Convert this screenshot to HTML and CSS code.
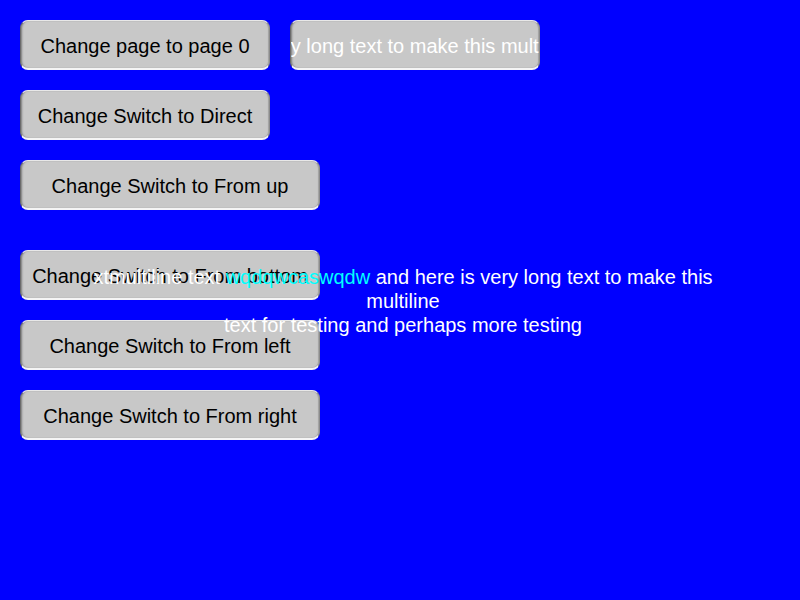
FILE: index.html
```html
<!DOCTYPE html>
<html>
<head>
<meta charset="utf-8">
<link rel="stylesheet" href="styles.css">
</head>
<body>
<div class="screen">
  <div class="row">
    <div class="btn w250">Change page to page 0</div>
    <div class="btn w250 clip"><span class="scroll">very long text to make this multiline</span></div>
  </div>
  <div class="row"><div class="btn w250">Change Switch to Direct</div></div>
  <div class="row"><div class="btn w300">Change Switch to From up</div></div>
  <div class="row gap-top"><div class="btn w300">Change Switch to From bottom</div></div>
  <div class="row"><div class="btn w300">Change Switch to From left</div></div>
  <div class="row"><div class="btn w300">Change Switch to From right</div></div>
  <div class="overlay">
    <div class="line">xtmultiline text <span class="cyan">wqdqwcaswqdw</span> and here is very long text to make this</div>
    <div class="line">multiline</div>
    <div class="line">text for testing and perhaps more testing</div>
  </div>
</div>
</body>
</html>
```
FILE: styles.css
```css
html, body {
  margin: 0;
  padding: 0;
  background: #0000ff;
}
.screen {
  position: relative;
  width: 800px;
  height: 600px;
  box-sizing: border-box;
  padding: 20px;
  display: flex;
  flex-direction: column;
  gap: 20px;
  font-family: "Liberation Sans", Arial, sans-serif;
  font-size: 20px;
}
.row {
  display: flex;
  gap: 20px;
}
.gap-top {
  margin-top: 20px;
}
.btn {
  box-sizing: border-box;
  height: 50px;
  padding-top: 3px;
  background: #c8c8c8;
  border-radius: 8px;
  border-top: 1px solid #e8e8e8;
  border-left: 1px solid #6a6a6a;
  border-right: 1px solid #8a8a8a;
  border-bottom: 2px solid #f4f4f4;
  box-shadow: inset 2px 0 2px -1px #7a7a7a, inset -1px 0 1px 0 #a0a0a0;
  display: flex;
  align-items: center;
  justify-content: center;
  color: #000;
  white-space: nowrap;
}
.w250 { width: 250px; }
.w300 { width: 300px; }
.clip {
  overflow: hidden;
  justify-content: flex-start;
  color: #fff;
}
.scroll {
  margin-left: -28px;
}
.overlay {
  position: absolute;
  left: 0;
  top: 265px;
  width: 806px;
  color: #fff;
  text-align: center;
  line-height: 24px;
}
.cyan { color: #00ffff; }
```
